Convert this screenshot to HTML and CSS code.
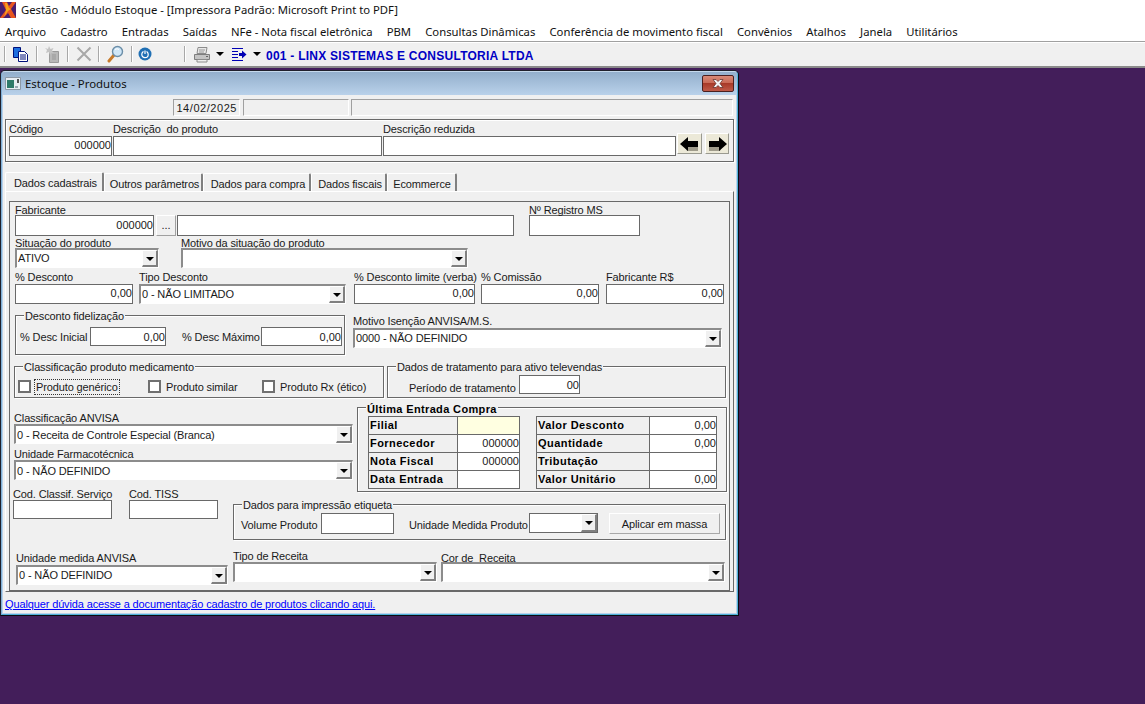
FILE: index.html
```html
<!DOCTYPE html>
<html lang="pt-BR">
<head>
<meta charset="utf-8">
<title>Gestão - Módulo Estoque</title>
<link rel="stylesheet" href="styles.css">
</head>
<body>
<div class="app">
  <header class="appbar">
    <svg class="logo" width="16" height="16" viewBox="0 0 16 16"><rect width="16" height="16" fill="#4a1d6e"/><path d="M2 0h5l2 4 3-4h4L11 7l5 9H11L8 11l-5 5H0l6-8z" fill="#e8551e"/><path d="M5 1h2l2 5 2 1-3 2-4 6 2-7z" fill="#f7a11a"/></svg>
    <span>Gestão&nbsp; - Módulo Estoque - [Impressora Padrão: Microsoft Print to PDF]</span>
  </header>
  <nav class="menubar">
    <span>Arquivo</span><span>Cadastro</span><span>Entradas</span><span>Saídas</span><span>NFe - Nota fiscal eletrônica</span><span>PBM</span><span>Consultas Dinâmicas</span><span>Conferência de movimento fiscal</span><span>Convênios</span><span>Atalhos</span><span>Janela</span><span>Utilitários</span>
  </nav>
  <div class="toolbar">
    <i class="sep sep-first"></i>
    <svg class="tool tool-copy" width="17" height="17" viewBox="0 0 17 17"><path d="M1.500 1.500h7v10h-7z" fill="#1e6fe0" stroke="#00107a"/><path d="M6.500 5.500h6l3 3v7h-9z" fill="#fff" stroke="#00107a"/><path d="M8 9h6M8 11h6M8 13h6" stroke="#00107a"/></svg>
    <i class="sep"></i>
    <svg class="tool tool-paste" width="16" height="17" viewBox="0 0 16 17"><path d="M5.500 5.500h9v11h-9z" fill="#b8b8b8" stroke="#9a9a9a"/><path d="M1 2l3 1 1-3 1.500 3 3-1-1.500 3 2 2-3 0-1 2-1-3-3 1 1-3z" fill="#c4c4c4"/><path d="M8 9h4M8 11h4M8 13h4" stroke="#999"/></svg>
    <i class="sep"></i>
    <svg class="tool tool-x" width="16" height="16" viewBox="0 0 16 16"><path d="M1.500 1.500L14.500 14.500M14.500 1.500L1.500 14.500" stroke="#a8a8a8" stroke-width="2"/></svg>
    <i class="sep"></i>
    <svg class="tool tool-find" width="17" height="18" viewBox="0 0 17 18"><path d="M7 10l-5 6" stroke="#c77a2a" stroke-width="3" stroke-linecap="round"/><circle cx="10.500" cy="6.500" r="5" fill="#cfe6f7" stroke="#6b8ea8" stroke-width="1.400"/><path d="M8 4.500q2-1.500 4 0" stroke="#fff" fill="none"/></svg>
    <i class="sep"></i>
    <svg class="tool tool-power" width="14" height="14" viewBox="0 0 14 14"><circle cx="7" cy="7" r="6.500" fill="#1f6fb4"/><circle cx="7" cy="7.500" r="3.200" fill="none" stroke="#fff" stroke-width="1.200"/><path d="M7 3v4.500" stroke="#1f6fb4" stroke-width="3"/><path d="M7 3.500v3.500" stroke="#fff" stroke-width="1.200"/></svg>
    <i class="sep sep-print"></i>
    <svg class="tool tool-print" width="18" height="17" viewBox="0 0 18 17"><path d="M5 1.500h9l-1 6H4z" fill="#e8e8e8" stroke="#8c8c8c"/><path d="M1.500 8.500h15v5h-15z" fill="#c4c4c4" stroke="#7e7e7e"/><path d="M4 13.500h10v2.500H4z" fill="#efefef" stroke="#8c8c8c"/><path d="M6 4h6M6 6h5" stroke="#9a9a9a"/><path d="M13 10.500h2" stroke="#666"/></svg>
    <i class="caret caret-print"></i>
    <svg class="tool tool-list" width="15" height="15" viewBox="0 0 15 15"><path d="M0 1.500h11M0 4.500h6M0 7.500h6M0 10.500h6M0 13.500h11" stroke="#0000b4"/><path d="M7 6h3V3.500L14.500 7.500 10 11.500V9H7z" fill="#0000b4"/></svg>
    <i class="caret caret-list"></i>
    <strong class="company">001 - LINX SISTEMAS E CONSULTORIA LTDA</strong>
  </div>
  <main class="desktop">
    <section class="window">
      <div class="frame">
        <div class="win-title">
          <svg class="win-icon" width="16" height="14" viewBox="0 0 16 14"><path d="M.5 .5h15v12h-15z" fill="#e8eef4" stroke="#8d99a6"/><path d="M2 3h7v8H2z" fill="#2e7a6a"/><path d="M10 9h3v2h-3z" fill="#9aa8b4"/><path d="M13 2v4" stroke="#222" stroke-width="1.500"/></svg>
          <span class="win-caption">Estoque - Produtos</span>
          <button class="win-close" type="button"><svg width="16" height="11" viewBox="0 0 16 11"><path d="M3 1.500h3l2 2 2-2h3L10 5.500l3 4h-3L8 7.500l-2 2H3l3-4z" fill="#f4f4f4" stroke="#5a2a24" stroke-width=".7"/></svg></button>
        </div>
        <div class="content">
          <div class="panels">
            <div class="panel panel-date">14/02/2025</div>
            <div class="panel panel-mid"></div>
            <div class="panel panel-wide"></div>
          </div>

          <div class="group head">
            <div class="field w-codigo"><label>Código</label><div class="input num">000000</div></div>
            <div class="field w-desc"><label>Descrição&nbsp; do produto</label><div class="input"></div></div>
            <div class="field w-reduz"><label>Descrição reduzida</label><div class="input"></div></div>
            <button class="nav-btn nav-prev" type="button"><svg width="20" height="16" viewBox="0 0 20 16"><path d="M4 9h14v6H7z" fill="#a09c8c"/><path d="M8 1v4h10v6H8v4L0 8z" fill="#000"/></svg></button>
            <button class="nav-btn nav-next" type="button"><svg width="20" height="16" viewBox="0 0 20 16"><path d="M2 9h14l-3 6H2z" fill="#a09c8c"/><path d="M12 1v4H2v6h10v4l8-7z" fill="#000"/></svg></button>
          </div>

          <div class="tabs">
            <div class="tab tab-1 active">Dados cadastrais</div>
            <div class="tab tab-2">Outros parâmetros</div>
            <div class="tab tab-3">Dados para compra</div>
            <div class="tab tab-4">Dados fiscais</div>
            <div class="tab tab-5">Ecommerce</div>
          </div>

          <div class="tabpanel">
            <div class="inner">
              <div class="row row-fab">
                <div class="field w-fab"><label class="lb-11">Fabricante</label><div class="input h21 num">000000</div></div>
                <button class="dots" type="button">...</button>
                <div class="field w-fabname"><label class="lb-11">&nbsp;</label><div class="input h21"></div></div>
                <div class="field w-reg"><label class="lb-11">Nº Registro MS</label><div class="input h21"></div></div>
              </div>

              <div class="row row-sit">
                <div class="field w-sit"><label class="lb-11">Situação do produto</label><div class="combo"><span>ATIVO</span><i class="drop"></i></div></div>
                <div class="field w-mot"><label class="lb-11">Motivo da situação do produto</label><div class="combo"><span></span><i class="drop"></i></div></div>
              </div>

              <div class="row row-desc">
                <div class="field w-pct"><label>% Desconto</label><div class="input num">0,00</div></div>
                <div class="field w-tipo"><label>Tipo Desconto</label><div class="combo h21"><span>0 - NÃO LIMITADO</span><i class="drop"></i></div></div>
                <div class="field w-lim"><label>% Desconto limite (verba)</label><div class="input num">0,00</div></div>
                <div class="field w-com"><label>% Comissão</label><div class="input num">0,00</div></div>
                <div class="field w-fabr"><label>Fabricante R$</label><div class="input num">0,00</div></div>
              </div>

              <div class="row row-fid">
                <div class="group box-fid">
                  <span class="legend">Desconto fidelização</span>
                  <span class="lbl lbl-ini">% Desc Inicial</span>
                  <div class="input h19 num w-ini">0,00</div>
                  <span class="lbl lbl-max">% Desc Máximo</span>
                  <div class="input h19 num w-max">0,00</div>
                </div>
                <div class="field w-isen"><label>Motivo Isenção ANVISA/M.S.</label><div class="combo"><span>0000 - NÃO DEFINIDO</span><i class="drop"></i></div></div>
              </div>

              <div class="row row-class">
                <div class="group box-class">
                  <span class="legend">Classificação produto medicamento</span>
                  <div class="check w-ck1"><i class="ck"></i><span class="focus">Produto genérico</span></div>
                  <div class="check w-ck2"><i class="ck"></i><span>Produto similar</span></div>
                  <div class="check"><i class="ck"></i><span>Produto Rx (ético)</span></div>
                </div>
                <div class="group box-trat">
                  <span class="legend">Dados de tratamento para ativo televendas</span>
                  <span class="lbl lbl-per">Período de tratamento</span>
                  <div class="input h19 num w-per">00</div>
                </div>
              </div>

              <div class="area">
                <div class="col-anvisa">
                  <label>Classificação ANVISA</label>
                  <div class="combo"><span>0 - Receita de Controle Especial (Branca)</span><i class="drop"></i></div>
                  <label class="next">Unidade Farmacotécnica</label>
                  <div class="combo"><span>0 - NÃO DEFINIDO</span><i class="drop"></i></div>
                </div>
                <div class="group box-ult">
                  <span class="legend legend-bold">Última Entrada Compra</span>
                  <div class="sheet sheet-a">
                    <b>Filial</b><span class="val hl"></span>
                    <b>Fornecedor</b><span class="val">000000</span>
                    <b>Nota Fiscal</b><span class="val">000000</span>
                    <b>Data Entrada</b><span class="val"></span>
                  </div>
                  <div class="sheet sheet-b">
                    <b>Valor Desconto</b><span class="val">0,00</span>
                    <b>Quantidade</b><span class="val">0,00</span>
                    <b>Tributação</b><span class="val"></span>
                    <b>Valor Unitário</b><span class="val">0,00</span>
                  </div>
                </div>
                <div class="col-cod">
                  <div class="field w-serv"><label>Cod. Classif. Serviço</label><div class="input h19"></div></div>
                  <div class="field w-tiss"><label>Cod. TISS</label><div class="input h19"></div></div>
                </div>
                <div class="group box-etq">
                  <span class="legend">Dados para impressão etiqueta</span>
                  <span class="lbl lbl-vol">Volume Produto</span>
                  <div class="input h21 w-vol"></div>
                  <span class="lbl lbl-und">Unidade Medida Produto</span>
                  <div class="combo h21 w-und"><span></span><i class="drop"></i></div>
                  <button class="apply" type="button">Aplicar em massa</button>
                </div>
              </div>

              <div class="row row-last">
                <div class="field w-uma"><label class="lb-14">Unidade medida ANVISA</label><div class="combo"><span>0 - NÃO DEFINIDO</span><i class="drop"></i></div></div>
                <div class="field w-rec"><label>Tipo de Receita</label><div class="combo"><span></span><i class="drop"></i></div></div>
                <div class="field w-cor"><label class="lb-low">Cor de&nbsp; Receita</label><div class="combo"><span></span><i class="drop"></i></div></div>
              </div>
            </div>
          </div>

          <a class="doc-link" href="#">Qualquer dúvida acesse a documentação cadastro de produtos clicando aqui.</a>
        </div>
      </div>
    </section>
  </main>
</div>
</body>
</html>
```

FILE: styles.css
```css
* { box-sizing: border-box; }
html, body { margin: 0; height: 100%; overflow: hidden; }
body {
  background: #431e5a;
  font-family: "Liberation Sans", Arial, sans-serif;
  font-size: 11px;
  letter-spacing: -.13px;
  color: #000;
}
.app { width: 1145px; height: 704px; display: flex; flex-direction: column; }

/* app chrome */
.appbar {
  height: 21px; background: #fff; display: flex; align-items: center; gap: 5px;
  padding: 0 0 2px 0; font: 11.3px "Noto Sans", sans-serif; letter-spacing: 0; color: #111;
}
.menubar {
  height: 20px; background: #fff; display: flex; align-items: center; gap: 14.1px;
  padding: 0 0 0 5px; font: 11.3px "Noto Sans", sans-serif; letter-spacing: 0; color: #111;
}
.toolbar {
  height: 27px; background: #f0f0f0; display: flex; align-items: center; position: relative;
  border-top: 1px solid #a0a0a0; box-shadow: inset 0 1px 0 #fff;
  border-bottom: 2px solid #8a8a8a;
}
.sep { width: 2px; height: 16px; border-left: 1px solid #a8a8a8; border-right: 1px solid #fff; flex: none; }
.sep-first { margin-left: 4px; }
.tool { flex: none; }
.tool-copy { margin: 0 7px 0 6px; }
.tool-paste { margin: 0 7px 0 6px; }
.tool-x { margin: 0 6px 0 7px; }
.tool-find { margin: 0 7px 0 7px; }
.tool-power { margin: 0 0 0 5px; }
.sep-print { margin-left: 32px; }
.tool-print { margin-left: 7px; }
.caret {
  width: 0; height: 0; border-left: 4px solid transparent; border-right: 4px solid transparent;
  border-top: 4px solid #000; flex: none;
}
.caret-print { margin-left: 5px; }
.tool-list { margin-left: 8px; }
.caret-list { margin-left: 6px; }
.company {
  margin: 3px 0 0 5px; color: #0000c4; font: bold 12px "Liberation Sans", sans-serif; letter-spacing: .25px;
}
.desktop { flex: 1; position: relative; background: #431e5a; }

/* window */
.window {
  position: absolute; left: 0; top: 2px; width: 739px; height: 546px;
  border-right: 1px solid #0a0a12; border-bottom: 1px solid #0a0a12;
  border-top: 1px solid #20202c; border-left: 1px solid #20202c;
  border-radius: 5px 5px 0 0;
}
.frame {
  height: 100%; border: 1px solid #4fb0d8; border-top-color: #c6d9ec; border-left-color: #7fb0d6;
  border-radius: 4px 4px 0 0;
  background: #b9d1ea; padding: 0 1px 1px 1px; display: flex; flex-direction: column;
}
.win-title {
  height: 23px; flex: none; margin: 0 -1px; padding: 0 3px 0 3px;
  background: linear-gradient(#93afcc, #b9d1ea); display: flex; align-items: center;
  border-radius: 3px 3px 0 0;
}
.win-caption { margin-left: 4px; font: 11.4px "Noto Sans", sans-serif; letter-spacing: 0; color: #111; }
.win-close {
  margin-left: auto; width: 32px; height: 17px; padding: 0; border: 1px solid #4a2020; border-radius: 2px;
  background: linear-gradient(#d98a78 0, #c96a56 45%, #a83a28 50%, #bf5a48 100%);
  display: flex; align-items: center; justify-content: center;
}
.content { flex: 1; background: #f0f0f0; min-height: 0; }

/* common controls */
label, .lbl, .legend, .tab, .check span, .doc-link, .panel, .input, .combo span, .sheet, .apply { white-space: nowrap; }
label { display: block; height: 13px; line-height: 13px; color: #1a1a1a; }
.lb-11 { height: 11px; line-height: 13px; }
.lb-14 { height: 14px; line-height: 15px; }
.lb-low { line-height: 19px; }
.next { margin-top: 3px; }
.field { flex: none; }
.input {
  height: 20px; background: #fff; border: 1px solid #696969; padding: 0 1px;
  line-height: 17px; color: #1a1a1a;
}
.h19 { height: 19px; line-height: 18px; }
.h21 { height: 21px; line-height: 18px; }
.num { text-align: right; padding-right: 0; letter-spacing: 0; }
.combo {
  height: 20px; background: #fff; position: relative; padding: 0 18px 0 1px; line-height: 17px;
  border-top: 2px solid #8c8c8c; border-left: 2px solid #8c8c8c;
  border-right: 1px solid #fff; border-bottom: 1px solid #fff; color: #1a1a1a;
}
.combo span { display: block; overflow: hidden; }
.drop {
  position: absolute; right: 0; top: 0; bottom: 0; width: 16px; background: #f0f0f0;
  border-right: 2px solid #808080; border-bottom: 2px solid #808080;
  border-top: 1px solid #fff; border-left: 1px solid #fff;
}
.drop::after {
  content: ""; position: absolute; left: 3px; top: 6px; width: 0; height: 0;
  border-left: 4px solid transparent; border-right: 4px solid transparent; border-top: 4px solid #000;
}
.group { border: 1px solid #696969; box-shadow: 1px 1px 0 #fff, inset 1px 1px 0 #fff; position: relative; flex: none; }
.legend {
  position: absolute; top: -7px; left: 8px; height: 14px; line-height: 14px; padding: 0 1px;
  background: #f0f0f0; color: #1a1a1a;
}
.legend-bold { font-weight: bold; letter-spacing: .36px; top: -6px; color: #000; }

/* top panels */
.panels { display: flex; height: 17px; margin: 4px 0 0 170px; }
.panel {
  border-top: 1px solid #a0a0a0; border-left: 1px solid #a0a0a0;
  border-bottom: 1px solid #fff; border-right: 1px solid #fff;
  line-height: 17px; text-align: right; padding-right: 2px; color: #1a1a1a;
}
.panel-date { width: 67px; letter-spacing: .55px; }
.panel-mid { width: 106px; margin-left: 3px; }
.panel-wide { width: 382px; margin-left: 2px; }

/* header */
.head { width: 729px; height: 43px; margin: 3px 0 0 2px; padding: 3px 0 0 3px; display: flex; align-items: flex-start; }
.w-codigo { width: 103px; }
.w-desc { width: 269px; margin-left: 1px; }
.w-reduz { width: 293px; margin-left: 1px; }
.nav-btn {
  flex: none; height: 21px; margin-top: 10px; padding: 0; background: #ece9d8;
  border: 1px solid; border-color: #fff #9a9a90 #9a9a90 #fff;
  display: flex; align-items: center; justify-content: center;
}
.nav-prev { width: 25px; margin-left: 1px; }
.nav-next { width: 24px; margin-left: 3px; }

/* tabs */
.tabs { display: flex; align-items: flex-end; height: 19px; margin: 10px 0 0 2px; position: relative; }
.tab {
  height: 18px; line-height: 21px; text-align: center; color: #1a1a1a; padding-left: 3px;
  border-top: 1px solid #fff; border-left: 1px solid #fff; border-right: 2px solid #808080;
  border-radius: 2px 2px 0 0;
}
.tab-1 { width: 99px; height: 19px; }
.tab-2 { width: 99px; }
.tab-3 { width: 108px; }
.tab-4 { width: 76px; }
.tab-5 { width: 70px; padding-left: 1px; }

.tabpanel {
  width: 729px; height: 401px; margin-left: 2px; padding: 9px 3px 0 3px;
  border-top: 1px solid #fff; border-left: 1px solid #fff;
  border-right: 1px solid #696969; border-bottom: 1px solid #696969;
}
.inner { width: 721px; height: 390px; border: 1px solid #696969; padding-top: 2px; }
.row { display: flex; align-items: flex-start; margin-left: 5px; }

/* row: fabricante */
.w-fab { width: 139px; }
.dots {
  width: 20px; height: 21px; margin: 11px 0 0 2px; padding: 0 0 4px; font: 11px "Liberation Sans", sans-serif;
  background: #f0f0f0; border: 1px solid; border-color: #fff #a0a0a0 #a0a0a0 #fff; flex: none; color: #1a1a1a;
  display: flex; align-items: flex-end; justify-content: center;
}
.w-fabname { width: 337px; margin-left: 1px; }
.w-reg { width: 111px; margin-left: 15px; }

/* row: situacao */
.row-sit { margin-top: 1px; }
.w-sit { width: 144px; }
.w-mot { width: 287px; margin-left: 22px; }

/* row: desconto */
.row-desc { margin-top: 3px; }
.w-pct { width: 118px; }
.w-tipo { width: 207px; margin-left: 6px; }
.w-lim { width: 121px; margin-left: 8px; }
.w-com { width: 118px; margin-left: 6px; }
.w-fabr { width: 118px; margin-left: 7px; }

/* row: fidelizacao */
.row-fid { margin-top: 11px; }
.box-fid { width: 330px; height: 40px; display: flex; align-items: flex-start; padding: 11px 0 0 4px; }
.lbl { color: #1a1a1a; line-height: 21px; flex: none; }
.lbl-ini { width: 70px; }
.w-ini { width: 76px; flex: none; }
.lbl-max { width: 79px; margin-left: 16px; }
.w-max { width: 81px; flex: none; }
.w-isen { width: 369px; margin-left: 8px; }

/* row: classificacao */
.row-class { margin: 11px 0 0 4px; }
.box-class { width: 370px; height: 32px; display: flex; align-items: flex-start; padding: 13px 0 0 3px; }
.check { display: flex; align-items: center; height: 13px; color: #1a1a1a; }
.check span { line-height: 15px; height: 14px; }
.w-ck1 { width: 130px; }
.w-ck2 { width: 114px; }
.ck { width: 13px; height: 13px; background: #fff; border: 2px solid #707070; flex: none; margin-right: 5px; }
.focus { outline: 1px dotted #333; margin-left: -1px; padding: 0 1px; }
.box-trat { width: 339px; height: 32px; margin-left: 3px; display: flex; align-items: flex-start; padding: 8px 0 0 21px; }
.lbl-per { width: 110px; line-height: 26px; }
.w-per { width: 61px; flex: none; }

/* area: anvisa / ultima entrada / codigos / etiqueta */
.area {
  display: grid; margin: 9px 0 0 3px;
  grid-template-columns: 220px 124px 370px;
  grid-template-rows: 80px 5px 12px 36px;
}
.area label { line-height: 15px; }
.col-anvisa { grid-column: 1 / 3; grid-row: 1; margin-left: 1px; padding-top: 4px; width: 339px; }
.col-anvisa .combo { line-height: 19px; }
.box-ult { grid-column: 3; grid-row: 1 / 3; padding: 8px 0 0 10px; display: flex; align-items: flex-start; }
.col-cod { grid-column: 1; grid-row: 2 / 5; display: flex; align-items: flex-start; }
.box-etq { grid-column: 2 / 4; grid-row: 4; width: 493px; display: flex; align-items: flex-start; padding: 8px 0 0 7px; }
.sheet {
  display: grid; grid-auto-rows: 18px; flex: none;
  border-top: 1px solid #696969; border-left: 1px solid #696969;
}
.sheet-a { width: 152px; grid-template-columns: 89px 62px; }
.sheet-b { width: 181px; grid-template-columns: 113px 67px; margin-left: 16px; }
.sheet b, .sheet .val { border-right: 1px solid #696969; border-bottom: 1px solid #696969; line-height: 16px; }
.sheet b { padding-left: 1px; letter-spacing: .45px; color: #000; }
.val { background: #fff; text-align: right; color: #1a1a1a; letter-spacing: 0; }
.val.hl { background: #ffffe1; }
.w-serv { width: 99px; }
.w-tiss { width: 89px; margin-left: 17px; }
.lbl-vol { width: 80px; line-height: 24px; }
.w-vol { width: 73px; flex: none; }
.lbl-und { width: 120px; margin-left: 15px; line-height: 24px; }
.w-und { width: 69px; flex: none; border: 1px solid #696969; }
.apply {
  width: 111px; height: 21px; margin-left: 11px; padding: 1px 0 0; flex: none; color: #1a1a1a;
  font: 11px "Liberation Sans", sans-serif; letter-spacing: -.13px; background: #f0f0f0;
  border: 1px solid; border-color: #fff #a8a8a8 #a8a8a8 #fff;
}

/* last row */
.row-last { margin: 9px 0 0 6px; }
.row-last label:not(.lb-14):not(.lb-low) { line-height: 15px; }
.w-uma { width: 212px; padding-top: 2px; }
.w-rec { width: 204px; margin-left: 5px; }
.w-cor { width: 284px; margin-left: 4px; }

.doc-link { display: block; height: 14px; line-height: 14px; margin: 5px 0 0 2px; color: #0000ff; text-decoration: underline; }
```
